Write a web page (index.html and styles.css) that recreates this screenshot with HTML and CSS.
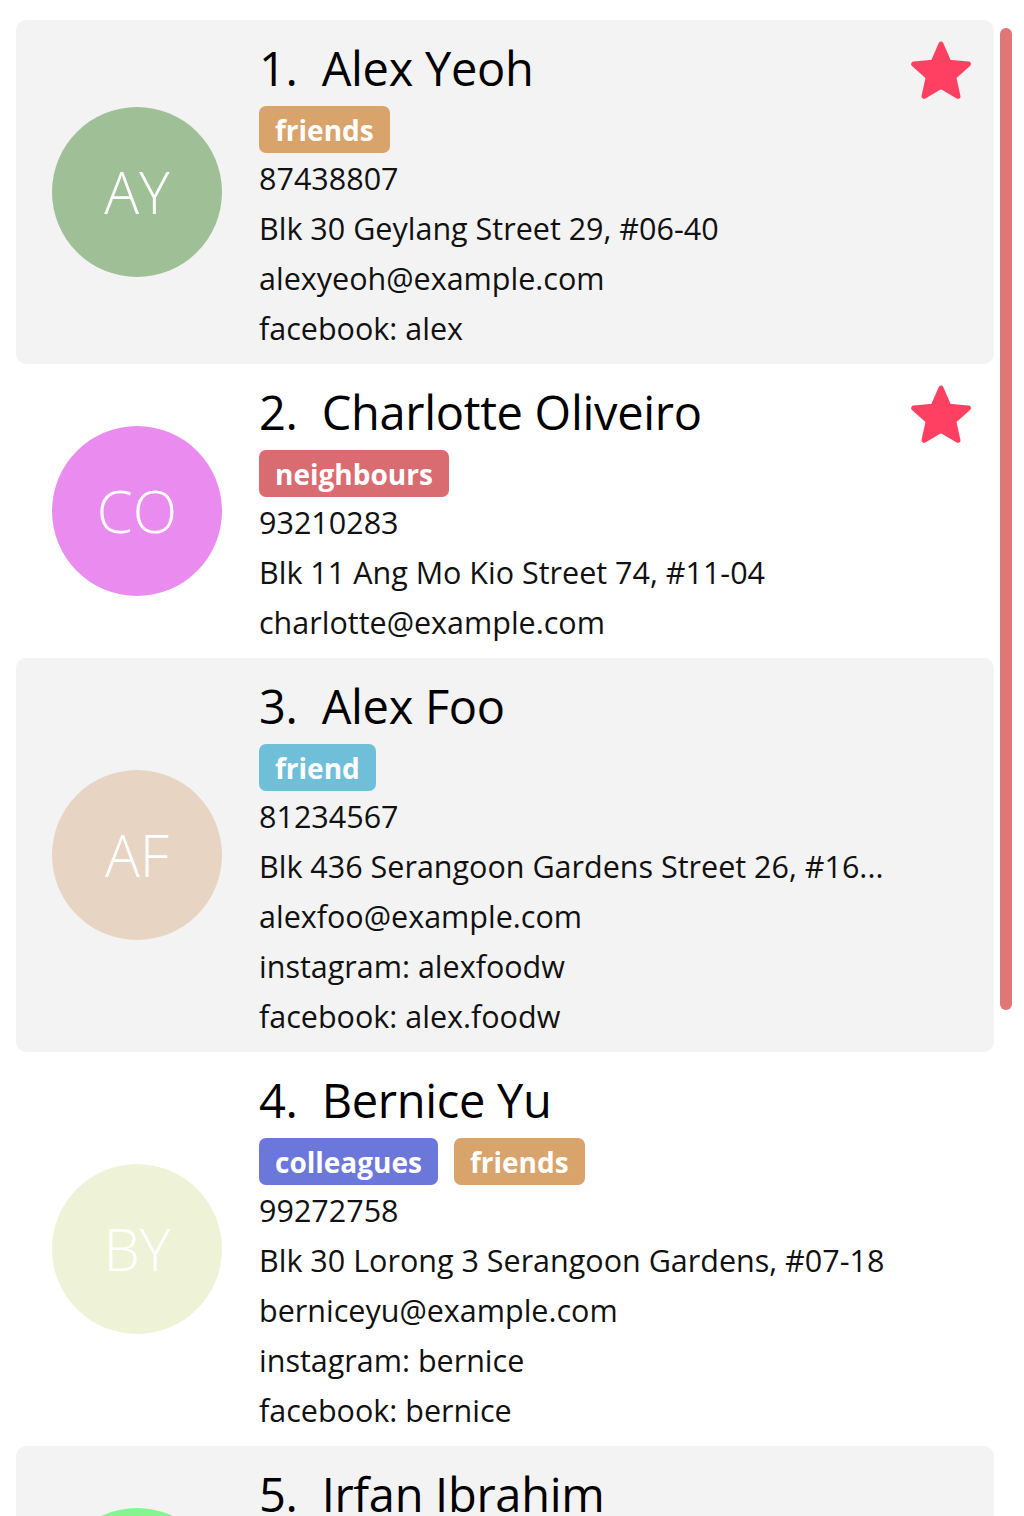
FILE: index.html
```html
<!DOCTYPE html>
<html>
<head>
<meta charset="utf-8">
<link rel="stylesheet" href="styles.css">
</head>
<body>
<div class="list">
  <div class="card shaded">
    <div class="avatar av-green">AY</div>
    <div class="info">
      <div class="name"><span class="idx">1.</span><span>Alex Yeoh</span></div>
      <div class="tags"><span class="tag t-friends">friends</span></div>
      <div class="row">87438807</div>
      <div class="row">Blk 30 Geylang Street 29, #06-40</div>
      <div class="row">alexyeoh@example.com</div>
      <div class="row">facebook: alex</div>
    </div>
    <svg class="star" viewBox="0 0 64 64"><polygon points="32,6 39.6,23.5 58.5,25.3 44.3,37.9 48.4,56.5 32,46.8 15.6,56.5 19.7,37.9 5.5,25.3 24.4,23.5" /></svg>
  </div>
  <div class="card">
    <div class="avatar av-pink">CO</div>
    <div class="info">
      <div class="name"><span class="idx">2.</span><span>Charlotte Oliveiro</span></div>
      <div class="tags"><span class="tag t-neighbours">neighbours</span></div>
      <div class="row">93210283</div>
      <div class="row">Blk 11 Ang Mo Kio Street 74, #11-04</div>
      <div class="row">charlotte@example.com</div>
    </div>
    <svg class="star" viewBox="0 0 64 64"><polygon points="32,6 39.6,23.5 58.5,25.3 44.3,37.9 48.4,56.5 32,46.8 15.6,56.5 19.7,37.9 5.5,25.3 24.4,23.5" /></svg>
  </div>
  <div class="card shaded">
    <div class="avatar av-beige">AF</div>
    <div class="info">
      <div class="name"><span class="idx">3.</span><span>Alex Foo</span></div>
      <div class="tags"><span class="tag t-friend">friend</span></div>
      <div class="row">81234567</div>
      <div class="row">Blk 436 Serangoon Gardens Street 26, #16...</div>
      <div class="row">alexfoo@example.com</div>
      <div class="row">instagram: alexfoodw</div>
      <div class="row">facebook: alex.foodw</div>
    </div>
  </div>
  <div class="card">
    <div class="avatar av-lime">BY</div>
    <div class="info">
      <div class="name"><span class="idx">4.</span><span>Bernice Yu</span></div>
      <div class="tags"><span class="tag t-colleagues">colleagues</span><span class="tag t-friends">friends</span></div>
      <div class="row">99272758</div>
      <div class="row">Blk 30 Lorong 3 Serangoon Gardens, #07-18</div>
      <div class="row">berniceyu@example.com</div>
      <div class="row">instagram: bernice</div>
      <div class="row">facebook: bernice</div>
    </div>
  </div>
  <div class="card shaded">
    <div class="avatar av-mint">IB</div>
    <div class="info">
      <div class="name"><span class="idx">5.</span><span>Irfan Ibrahim</span></div>
      <div class="tags"><span class="tag t-classmates">classmates</span></div>
      <div class="row">92492021</div>
      <div class="row">Blk 47 Tampines Street 20, #17-35</div>
      <div class="row">irfan@example.com</div>
    </div>
  </div>
</div>
<div class="scrollbar"></div>
</body>
</html>
```

FILE: styles.css
```css
html, body {
  margin: 0;
  padding: 0;
  background: #ffffff;
  height: 1516px;
  overflow: hidden;
}
body {
  font-family: "Open Sans", "Noto Sans", sans-serif;
  color: #111;
}
.list {
  width: 978px;
  margin-left: 16px;
  padding-top: 20px;
  display: flex;
  flex-direction: column;
}
.card {
  position: relative;
  display: flex;
  align-items: center;
  padding: 10px 0 11px 36px;
  border-radius: 10px;
}
.card.shaded {
  background: #f3f3f3;
}
.avatar {
  width: 170px;
  height: 170px;
  border-radius: 50%;
  flex: none;
  display: flex;
  align-items: center;
  justify-content: center;
  color: #fff;
  font-size: 58px;
  font-weight: 300;
  margin-right: 37px;
}
.av-green { background: #9fc096; }
.av-pink { background: #ea8bf0; }
.av-beige { background: #e8d4c2; }
.av-lime { background: #eef3d8; }
.av-mint { background: #86f48f; }
.info {
  display: flex;
  flex-direction: column;
}
.name {
  height: 76px;
  display: flex;
  align-items: center;
  gap: 24px;
  font-size: 47px;
  color: #000;
  letter-spacing: -0.3px;
}
.tags {
  display: flex;
  gap: 16px;
}
.tag {
  height: 47px;
  box-sizing: border-box;
  padding: 0 16px;
  border-radius: 7px;
  color: #fff;
  font-weight: 700;
  font-size: 28px;
  display: flex;
  align-items: center;
}
.t-friends { background: #d9a46c; }
.t-neighbours { background: #d96c71; }
.t-friend { background: #6fbfd9; }
.t-colleagues { background: #6c78d9; }
.t-classmates { background: #a36cd9; }
.row {
  height: 50px;
  display: flex;
  align-items: center;
  font-size: 30.5px;
  white-space: nowrap;
}
.star {
  position: absolute;
  top: 18px;
  right: 20px;
  width: 66px;
  height: 66px;
}
.star polygon {
  fill: #ff4063;
  stroke: #ff4063;
  stroke-width: 5;
  stroke-linejoin: round;
}
.scrollbar {
  position: fixed;
  left: 1000px;
  top: 28px;
  width: 12px;
  height: 982px;
  border-radius: 6px;
  background: #e07676;
}
```
